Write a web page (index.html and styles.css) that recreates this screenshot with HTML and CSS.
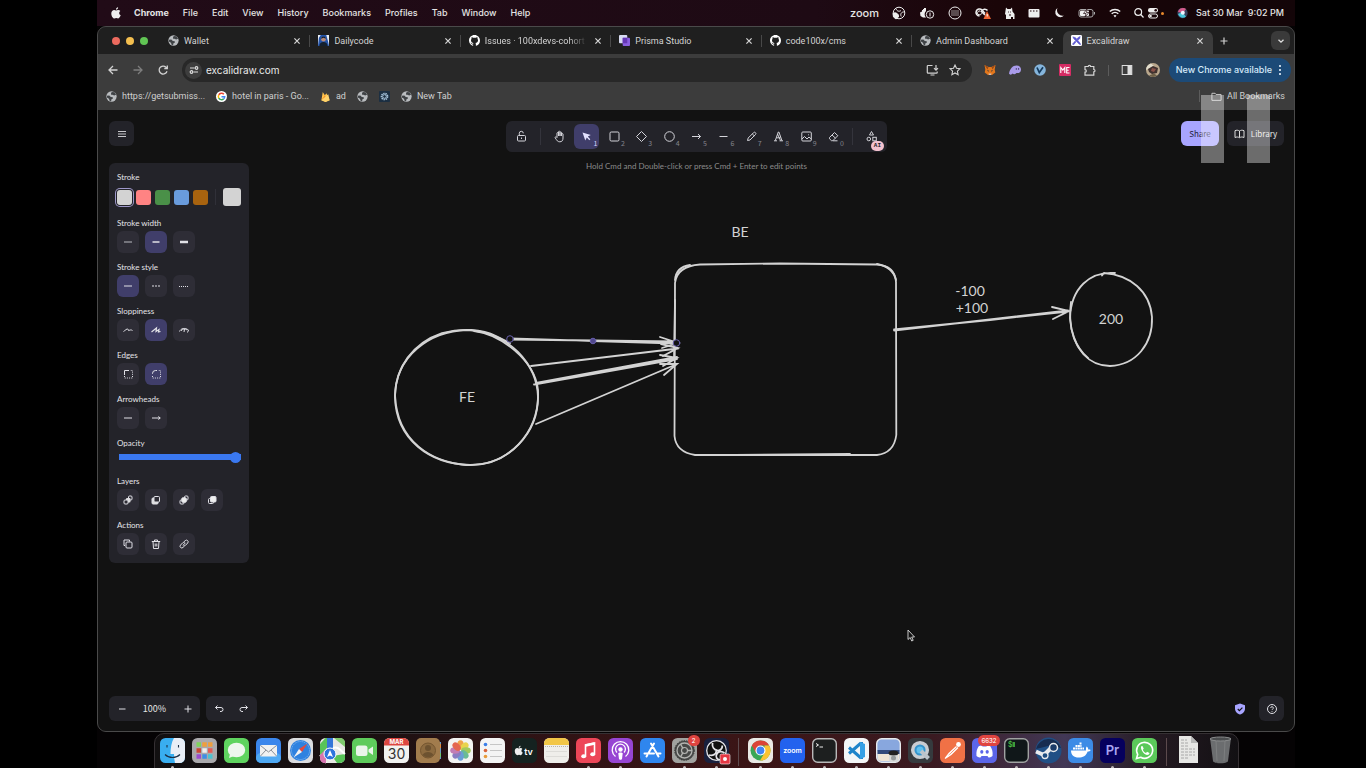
FILE: index.html
```html
<!DOCTYPE html>
<html lang="en">
<head>
<meta charset="utf-8">
<title>Excalidraw</title>
<link rel="stylesheet" href="styles.css">
</head>
<body>
<svg class="sprite" aria-hidden="true">
  <symbol id="globe" viewBox="0 0 12 12"><circle cx="6" cy="6" r="5.6" fill="#b9bcbf"/><path d="M1 5.2 3.6 5l1.700 1.500 2 .2.3 1.600-1.600.6-.4 2-1.400.2-1-2.600L1 7zM6.200 1l3 .4L11 4.200 8.800 5 7.300 4.200 6 4.400 5.400 3z" fill="#3f4245"/></symbol>
  <symbol id="close" viewBox="0 0 8 8"><path d="M1.400 1.400 6.600 6.600M6.600 1.400 1.400 6.600" stroke="#d6d6d6" stroke-width="1.200"/></symbol>
  <symbol id="github" viewBox="0 0 16 16"><path fill="#fff" d="M8 0C3.58 0 0 3.58 0 8c0 3.54 2.29 6.53 5.47 7.59.4.07.55-.17.55-.38v-1.490c-2.230.480-2.690-.940-2.690-.940-.360-.920-.890-1.170-.890-1.170-.730-.500.050-.490.050-.490.800.060 1.230.830 1.230.830.710 1.210 1.870.860 2.330.660.070-.520.280-.870.500-1.070-1.780-.200-3.640-.890-3.640-3.950 0-.870.310-1.590.820-2.150-.080-.200-.360-1.020.080-2.120 0 0 .670-.210 2.200.820.640-.180 1.320-.270 2-.270s1.360.090 2 .270c1.530-1.040 2.200-.820 2.200-.820.440 1.100.160 1.920.080 2.120.510.560.820 1.270.820 2.150 0 3.070-1.870 3.750-3.650 3.950.290.250.540.730.540 1.480v2.190c0 .210.150.460.550.380A8 8 0 0 0 16 8c0-4.420-3.580-8-8-8z"/></symbol>
</svg>

<div class="desktop">
  <header class="menubar">
    <nav class="menus">
      <svg class="apple" width="10" height="13" viewBox="0 0 10 13"><path fill="#eee" d="M5 3.400C5.700 3.400 6.400 2.800 7.300 2.900 8.200 2.900 8.900 3.300 9.300 4 7.600 5.100 7.900 7.500 9.700 8.200 9.200 9.700 8.300 11.300 7.200 11.400 6.500 11.400 6.100 11 5.300 11 4.500 11 4.100 11.400 3.400 11.400 1.900 11.400.300 8.800.300 6.400.300 4.200 1.700 2.900 3.100 2.900 3.900 2.900 4.500 3.400 5 3.400zM5 2.700C4.900 1.400 5.900.400 7.100.200 7.200 1.500 6.200 2.700 5 2.700z"/></svg>
      <b>Chrome</b><span>File</span><span>Edit</span><span>View</span><span>History</span><span>Bookmarks</span><span>Profiles</span><span>Tab</span><span>Window</span><span>Help</span>
    </nav>
    <div class="status">
      <span class="zoomword">zoom</span>
      <svg width="14" height="14" viewBox="0 0 14 14" fill="none" stroke="#eee"><circle cx="7" cy="7" r="5.800"/><path d="M4 2.500C4.500 5 7 6 9 4.500M12.500 6C9.500 5.500 8 8 9.200 10.500"/><path d="M1 7.500a3.500 3.500 0 0 1 5.500 3.500L4 13 1.500 11z" fill="#eee"/></svg>
      <svg width="16" height="14" viewBox="0 0 16 14"><path fill="#eee" d="M1 6.500 3 5.500V4h1V3h1V2h2v3a4.500 4.500 0 0 0 0 6.500H4L1.500 10z"/><circle cx="11" cy="8.500" r="3.700" fill="none" stroke="#eee"/><path d="M11 6.500v4" stroke="#eee"/></svg>
      <svg width="14" height="14" viewBox="0 0 14 14"><circle cx="7" cy="7" r="6" fill="none" stroke="#eee"/><path d="M3.400 5h7.500M3.400 7h7.500M3.400 9h7.500" stroke="#eee" stroke-width="1.200" stroke-dasharray="1.200 .8"/></svg>
      <svg width="16" height="14" viewBox="0 0 16 14"><path d="M4.500 10a3.500 3.500 0 1 1 2.500-6l3 3.500" fill="none" stroke="#eee" stroke-width="1.600"/><path d="M10 9 6.500 5.500a3.500 3.500 0 0 1 6-1" fill="none" stroke="#eee" stroke-width="1.600"/><path d="M6.500 7.200a2 2 0 1 1-1-2" fill="none" stroke="#eee"/><path d="M12 5l4 8H8.500z" fill="#ee6535"/><path d="M12.200 8v2.500" stroke="#fff"/></svg>
      <svg width="11" height="14" viewBox="0 0 11 14"><path fill="#eee" d="M2 1.500 3.500 3h3L8 1.500l.5 4L10.500 8v5H9v-2H7v2H2V9L1 8z"/><path d="M4 6h.8M6 6h.8M5 9h2" stroke="#20070d"/></svg>
      <svg width="12" height="14" viewBox="0 0 12 14"><rect x=".5" y="3" width="11" height="8.500" rx="1" fill="#eee"/><path d="M2 5h1.500M5 5h1.500M8 5h1.500" stroke="#20070d"/></svg>
      <svg width="12" height="14" viewBox="0 0 12 14"><path fill="#eee" d="M4.500 2A5 5 0 1 0 11 9.500 5.500 5.500 0 0 1 4.500 2z"/></svg>
      <svg width="18" height="14" viewBox="0 0 18 14"><rect x="1" y="3.500" width="14" height="7.500" rx="2" fill="none" stroke="#aaa"/><rect x="2" y="4.500" width="9" height="5.500" rx="1" fill="#eee"/><path d="M9 3 5.500 7.500h2.500L7 11l4-4.500H8.500z" fill="#eee" stroke="#20070d" stroke-width=".7"/><path d="M16.500 6v2.500" stroke="#aaa"/></svg>
      <svg width="12" height="14" viewBox="0 0 12 14" fill="none" stroke="#eee" stroke-width="1.500"><path d="M.8 5.500a7.500 7.500 0 0 1 10.400 0M2.700 7.800a4.800 4.800 0 0 1 6.600 0"/><path d="M6 11.500 4.500 9.600a2.400 2.400 0 0 1 3 0z" fill="#eee" stroke="none"/></svg>
      <svg width="10" height="14" viewBox="0 0 10 14" fill="none" stroke="#eee" stroke-width="1.200"><circle cx="4.200" cy="6" r="3.400"/><path d="M6.700 8.500 9.500 11.500"/></svg>
      <svg class="control" width="16" height="14" viewBox="0 0 16 14"><rect x="0" y="2" width="10" height="4.500" rx="2.200" fill="#eee"/><circle cx="7.700" cy="4.200" r="1.300" fill="#20070d"/><rect x=".5" y="8" width="9" height="4" rx="2" fill="none" stroke="#eee"/><circle cx="2.500" cy="10" r="1.300" fill="#eee"/><circle cx="14.500" cy="7.500" r="1.500" fill="#e8892c"/></svg>
      <svg class="siri" width="11" height="14" viewBox="0 0 11 14"><circle cx="5.500" cy="7" r="5.200" fill="#39415c"/><path d="M1 6a5 5 0 0 1 8-3L6 7z" fill="#d45b8a"/><path d="M1 8a5 5 0 0 0 8 2.500L5 6z" fill="#47c5d8"/><circle cx="5.800" cy="6.800" r="2" fill="#f1f5ff"/></svg>
      <time>Sat 30 Mar&nbsp; 9:02 PM</time>
    </div>
  </header>

  <main class="window">
    <div class="tabstrip">
      <div class="lights"><i class="red"></i><i class="yellow"></i><i class="green"></i></div>
      <div class="tabs">
        <div class="tab"><svg class="fav"><use href="#globe"/></svg><span>Wallet</span><button aria-label="Close Wallet"><svg><use href="#close"/></svg></button></div>
        <div class="tab"><svg class="fav" viewBox="0 0 12 12"><rect width="12" height="12" fill="#2453a8"/><path d="M0 0h3L1 3 0 12zM9 0h3v12l-1-5z" fill="#e8edf5"/><circle cx="6" cy="4.500" r="2.500" fill="#b98a78"/><path d="M3.500 4a2.500 2.500 0 0 1 5 0L6 3zM1.500 12c0-3 2-4.500 4.500-4.500s4.500 1.500 4.500 4.500z" fill="#14202f"/></svg><span>Dailycode</span><button aria-label="Close Dailycode"><svg><use href="#close"/></svg></button></div>
        <div class="tab"><svg class="fav"><use href="#github"/></svg><span class="fade">Issues · 100xdevs-cohort</span><button aria-label="Close Issues"><svg><use href="#close"/></svg></button></div>
        <div class="tab"><svg class="fav" viewBox="0 0 12 12"><rect width="9" height="9" rx="1" fill="#d8dcf2"/><rect x="4" y="3" width="8" height="9" rx="1" fill="#8a5fe0"/><rect x="4" y="3" width="5" height="6" fill="#6537b5"/></svg><span>Prisma Studio</span><button aria-label="Close Prisma Studio"><svg><use href="#close"/></svg></button></div>
        <div class="tab"><svg class="fav"><use href="#github"/></svg><span>code100x/cms</span><button aria-label="Close code100x/cms"><svg><use href="#close"/></svg></button></div>
        <div class="tab last"><svg class="fav"><use href="#globe"/></svg><span>Admin Dashboard</span><button aria-label="Close Admin Dashboard"><svg><use href="#close"/></svg></button></div>
        <div class="tab active"><svg class="fav" viewBox="0 0 12 12"><rect width="12" height="12" rx="1.500" fill="#fff"/><path d="M2 2l3 1 5 6 .5 1.500L9 10 3 4zM10 1.500 7.500 3 6 5l1 1 2.500-2zM4.500 6.500 1.500 10l1.500.500 2.500-3z" fill="#5b57d1" stroke="#5b57d1" stroke-width=".6"/></svg><span>Excalidraw</span><button aria-label="Close Excalidraw"><svg><use href="#close"/></svg></button></div>
      </div>
      <div class="tabtools">
        <button aria-label="New tab"><svg width="10" height="10" viewBox="0 0 10 10"><path d="M5 1.500v7M1.500 5h7" stroke="#d0d0d0" stroke-width="1.200"/></svg></button>
        <button class="tabsearch" aria-label="Search tabs"><svg width="8" height="8" viewBox="0 0 8 8"><path d="M1.500 2.700 4 5.200 6.500 2.700" fill="none" stroke="#ddd" stroke-width="1.300"/></svg></button>
      </div>
    </div>

    <div class="toolbar">
      <button aria-label="Back"><svg width="12" height="12" viewBox="0 0 12 12" fill="none" stroke="#d2d2d2" stroke-width="1.300"><path d="M10.500 6H2M6 2 2 6l4 4"/></svg></button>
      <button aria-label="Forward"><svg width="12" height="12" viewBox="0 0 12 12" fill="none" stroke="#7d7d7d" stroke-width="1.300"><path d="M1.500 6H10M6 2l4 4-4 4"/></svg></button>
      <button aria-label="Reload"><svg width="12" height="12" viewBox="0 0 12 12" fill="none" stroke="#d2d2d2" stroke-width="1.300"><path d="M10 7.200A4 4 0 1 1 9 3.200l1 1"/><path d="M10.300 1.500v3H7.300" /></svg></button>
      <div class="omnibox">
        <button class="siteinfo" aria-label="Site information"><svg width="10" height="10" viewBox="0 0 10 10" fill="none" stroke="#ddd" stroke-width="1.200"><path d="M1 3h4.500M9 7H4.500"/><circle cx="7.500" cy="3" r="1.300"/><circle cx="2.500" cy="7" r="1.300"/></svg></button>
        <input type="text" value="excalidraw.com" aria-label="Address">
        <button aria-label="Install app"><svg width="13" height="12" viewBox="0 0 13 12" fill="none" stroke="#d2d2d2" stroke-width="1.200"><path d="M6.500 1.500H2a.7.700 0 0 0-.7.700v6.300c0 .4.300.7.700.7h8.500c.4 0 .7-.3.700-.7V7.500M4.500 11h4M10 1v5M8 4.200l2 2 2-2"/></svg></button>
        <button aria-label="Bookmark"><svg width="12" height="12" viewBox="0 0 12 12" fill="none" stroke="#d2d2d2" stroke-width="1.100"><path d="M6 1l1.500 3.300 3.500.4-2.600 2.400.7 3.600L6 8.900l-3.100 1.800.7-3.600L1 4.700l3.500-.4z"/></svg></button>
      </div>
      <div class="extensions">
        <svg viewBox="0 0 12 12"><path d="M.5 1 4.500 3h3l4-2-.8 4.500.6 3L8 11H4L.7 8.500l.6-3z" fill="#e2761b"/><path d="M.5 1l4 2-1 2.500zM11.500 1l-4 2 1 2.500z" fill="#9a4a16"/><path d="M3 6l2 .7-.7 1zM9 6l-2 .7.7 1z" fill="#233447"/><path d="M4.500 9.500h3L7 11H5z" fill="#d6c0b3"/></svg>
        <svg viewBox="0 0 12 12"><path d="M0 9.500C1 5 3.500 1.500 7.500 1.500c3 0 4.500 2 4.500 4 0 3-2.500 4-4.500 3.500C6 10.500 4.500 10.800 3.800 9.500 2.500 11 .5 11 0 9.500z" fill="#a99bea"/><path d="M7.300 4.200v1.500M9.600 4.200v1.500" stroke="#3c315b"/></svg>
        <svg viewBox="0 0 12 12"><circle cx="6" cy="6" r="5.800" fill="#85b5dc"/><path d="M3 3.500l2.300 5L9 3.300" fill="none" stroke="#153a5c" stroke-width="1.700"/></svg>
        <svg viewBox="0 0 12 12"><rect width="12" height="12" rx="1" fill="#d52c64"/><path d="M1.800 9V3.500l2 2.500 2-2.500V9M10.500 3.500H7.700V9h2.800M7.700 6.200h2" fill="none" stroke="#fff" stroke-width="1.100"/></svg>
        <svg viewBox="0 0 12 12" fill="none" stroke="#d6d6d6" stroke-width="1.200"><path d="M1 2.500h3.200a1.200 1.200 0 1 1 2.400 0h3.200v3a1.200 1.200 0 1 1 0 2.400v3.300H1V8.200a1.300 1.300 0 0 0 0-2.600z"/></svg>
        <i class="vline"></i>
        <svg viewBox="0 0 12 12"><rect x="1.200" y="1.500" width="9.600" height="9" fill="none" stroke="#ddd"/><path d="M6.500 1.500h4.300v9H6.500z" fill="#ddd"/></svg>
        <svg class="avatar" viewBox="0 0 14 14"><circle cx="7" cy="7" r="7" fill="#b9a78c"/><path d="M0 7a7 7 0 0 1 5-6.600L8 3 2 6z" fill="#e0dccb"/><path d="M2 6l5-3 5 2-1 5-5 1-3-2z" fill="#40322f"/><path d="M6 5l4 1-2 3-3-1z" fill="#8a5148"/><path d="M3 12.500a7 7 0 0 0 8 0l-3-2z" fill="#6e6047"/></svg>
      </div>
      <button class="update">New Chrome available<svg width="4" height="12" viewBox="0 0 4 12" fill="#e7f1fb"><circle cx="2" cy="2" r="1.100"/><circle cx="2" cy="6" r="1.100"/><circle cx="2" cy="10" r="1.100"/></svg></button>
    </div>

    <div class="bookmarks">
      <a href="#"><svg><use href="#globe"/></svg>https://getsubmiss...</a>
      <a href="#"><svg viewBox="0 0 12 12"><circle cx="6" cy="6" r="6" fill="#fff"/><g fill="none" stroke-width="1.600"><path d="M8.600 3.600A3.500 3.500 0 0 0 3 4.300" stroke="#ea4335"/><path d="M3 4.300a3.500 3.500 0 0 0 0 3.400" stroke="#fbbc05"/><path d="M3 7.700a3.500 3.500 0 0 0 5.300.9" stroke="#34a853"/><path d="M8.300 8.600A3.400 3.400 0 0 0 9.500 6.200H6" stroke="#4285f4"/></g></svg>hotel in paris - Go...</a>
      <a href="#"><svg viewBox="0 0 12 12"><path d="M1.500 10 3 1l2.300 3.600L7 2.500 10.500 10 6 12z" fill="#ffc24a"/><path d="M1.500 10 5.300 4.600 6.500 7z" fill="#f4902b"/><path d="M1.500 10l7.500-6.500L10.500 10 6 12z" fill="#ffd36b"/></svg>ad</a>
      <a href="#" aria-label="Untitled bookmark"><svg><use href="#globe"/></svg></a>
      <a href="#" aria-label="Settings bookmark"><svg viewBox="0 0 12 12"><rect width="12" height="12" rx="1" fill="#1c2f42"/><circle cx="6" cy="6" r="3.300" fill="none" stroke="#a7c3da" stroke-width="1.800" stroke-dasharray="1.500 .8"/><circle cx="6" cy="6" r="2" fill="none" stroke="#a7c3da"/></svg></a>
      <a href="#"><svg><use href="#globe"/></svg>New Tab</a>
      <a href="#" class="all"><svg viewBox="0 0 12 12" fill="none" stroke="#d0d0d0"><path d="M1 2.500h3.500l1 1.300H11v6.400H1z"/></svg>All Bookmarks</a>
    </div>

    <section class="board">
      <svg class="scene" viewBox="98 110 1196 621" fill="none" stroke="#d3d3d3" stroke-width="1.800" stroke-linecap="round">
        <path d="M467 330C430 331 395 356 395 397 396 440 430 464 470 465 510 465 538 432 538 397 537 365 510 332 467 330"/>
        <path d="M474 331C500 334 535 360 538 390 540 433 508 467 466 465 433 462 397 443 395 395 396 368 412 343 442 333 462 328 482 329 496 336L510 343"/>
        <path d="M700 264.500 780 263.500 877 264.500Q895 266 896 282L896.300 435Q894 453 877 455L695 455Q676 452 674.500 436L675 283Q677 266 700 264.500"/>
        <path d="M675 280Q676 267 690 265M735 455 850 454M877 264Q893 267 896 280M675 300 674 360"/>
        <path d="M510 338.500 676 343.500M510 339.500 676 341.500M660 337 678 343 662 348"/>
        <path d="M531 366 678 348.500M661 344 678 348 663 356"/>
        <path d="M534 384.500 677 359M536 383 677 357M660 355 677 358 663 366"/>
        <path d="M536 424 677 364M660 364 677 364 664 375"/>
        <path d="M894 330.500 1068 310.500M894 329.500 990 320 1068 311.500M1052 307 1069 311 1053 319"/>
        <path d="M1115 273C1090 271 1071 288 1070 318 1072 350 1090 366 1110 366 1136 365 1153 344 1152 317 1150 291 1130 275 1104 273L1102 275.500"/>
        <path d="M1071 302C1067 330 1077 349 1088 358"/>
        <g stroke="#6860ac" stroke-width="1"><circle cx="510" cy="339" r="3.300" fill="#121212"/><circle cx="676.500" cy="343" r="3.300" fill="#121212"/><circle cx="593" cy="341" r="2.800" fill="#51488e"/></g>
        <g class="hand"><text x="740" y="237">BE</text><text x="467" y="402">FE</text><text x="970" y="296">-100</text><text x="972" y="313">+100</text><text x="1111" y="324">200</text></g>
      </svg>

      <div class="top">
        <div class="leftcol">
          <button class="island square" aria-label="Menu"><svg width="10" height="10" viewBox="0 0 10 10" stroke="#c8c8cc"><path d="M1 2.500h8M1 5h8M1 7.500h8"/></svg></button>
          <aside class="island panel">
            <fieldset class="colors"><legend>Stroke</legend><div class="row">
              <button class="swatch white on" aria-label="White"></button><button class="swatch pink" aria-label="Red"></button><button class="swatch grn" aria-label="Green"></button><button class="swatch blue" aria-label="Blue"></button><button class="swatch brown" aria-label="Brown"></button><i class="vline"></i><button class="swatch white big" aria-label="Current colour"></button></div></fieldset>
            <fieldset><legend>Stroke width</legend><div class="row">
              <button aria-label="Thin"><svg><path d="M2 6h8" stroke-width=".8"/></svg></button><button class="on" aria-label="Bold"><svg><path d="M2.500 6h7" stroke-width="1.700"/></svg></button><button aria-label="Extra bold"><svg><path d="M2 6h8" stroke-width="2.500"/></svg></button></div></fieldset>
            <fieldset><legend>Stroke style</legend><div class="row">
              <button class="on" aria-label="Solid"><svg><path d="M2 6h8"/></svg></button><button aria-label="Dashed"><svg><path d="M2 6h8" stroke-dasharray="2 1"/></svg></button><button aria-label="Dotted"><svg><path d="M1 6.500h10" stroke-dasharray="1 1"/></svg></button></div></fieldset>
            <fieldset><legend>Sloppiness</legend><div class="row">
              <button aria-label="Architect"><svg><path d="M1.500 7.500C3 6.500 5 4.500 5.800 5S6 7 7 6.500 9 5.500 10.500 6.500"/></svg></button><button class="on" aria-label="Artist"><svg><path d="M1.500 8 6.500 4 6 7.500 9 5.500 8.500 8 10.500 7.500" stroke-width="1.200"/></svg></button><button aria-label="Cartoonist"><svg><path d="M1.500 7.500C3 4 7 3.500 10.500 6L9.500 8.500M3 7c2-2.500 4-2.500 6-1M6.500 5 6 8" stroke-width="1"/></svg></button></div></fieldset>
            <fieldset><legend>Edges</legend><div class="row">
              <button aria-label="Sharp"><svg><path d="M2.500 7V2.500H7"/><path d="M2.500 8v2h8V2.500H8" stroke-dasharray="1 1.200"/></svg></button><button class="on" aria-label="Round"><svg><path d="M2.500 6V5.500a3 3 0 0 1 3-3H7"/><path d="M2.500 8v2h8V2.500H8" stroke-dasharray="1 1.200"/></svg></button></div></fieldset>
            <fieldset><legend>Arrowheads</legend><div class="row">
              <button aria-label="No start arrowhead"><svg><path d="M2 6h8"/></svg></button><button aria-label="End arrow"><svg><path d="M2 6h8M8.300 4.500 10.300 6 8.300 7.500"/></svg></button></div></fieldset>
            <fieldset class="opacity"><legend><label for="opacity">Opacity</label></legend><input id="opacity" type="range" min="0" max="100" value="100"></fieldset>
            <fieldset><legend>Layers</legend><div class="row">
              <button aria-label="Send to back"><svg><rect x="4" y="4" width="4.500" height="4.500" rx="1" fill="#ddd" stroke="none"/><rect x="6.500" y="2" width="3.500" height="4" rx="1"/><rect x="2" y="6" width="4" height="4" rx="1" fill="#2e2d35"/></svg></button><button aria-label="Send backward"><svg><rect x="2" y="4" width="6" height="6" rx="1" fill="#ddd"/><rect x="4" y="2.500" width="5.500" height="5.500" rx="1" fill="#2e2d35"/></svg></button><button aria-label="Bring forward"><svg><rect x="6.500" y="2" width="3.500" height="4" rx="1"/><rect x="2" y="6" width="4" height="4" rx="1"/><rect x="3.800" y="3.800" width="4.500" height="4.500" rx="1" fill="#eee"/></svg></button><button aria-label="Bring to front"><svg><rect x="2.500" y="4.500" width="5" height="5" rx="1"/><rect x="4.500" y="2.500" width="5.500" height="5.500" rx="1" fill="#eee"/></svg></button></div></fieldset>
            <fieldset><legend>Actions</legend><div class="row">
              <button aria-label="Duplicate"><svg><path d="M3 7.500H2V2h5.500v1.500"/><rect x="4" y="4" width="6" height="6" rx="1"/></svg></button><button aria-label="Delete"><svg><path d="M1.800 3.500h8.400M4.500 3.500V2h3v1.500M3 3.500l.5 7h5l.5-7M5.200 5.500v3M6.800 5.500v3"/></svg></button><button aria-label="Link"><svg><path d="M5 7.300 7.500 4.800M5.700 4l1.500-1.300a1.600 1.600 0 0 1 2.500 2.300L7.500 7.300a1.500 1.500 0 0 1-2 0M6.500 8 5 9.400a1.600 1.600 0 0 1-2.500-2.300L4.700 4.800a1.500 1.500 0 0 1 2 0"/></svg></button></div></fieldset>
          </aside>
        </div>
        <div class="midcol">
          <div class="island tools">
            <button aria-label="Lock"><svg><rect x="2.500" y="5.500" width="8" height="5.500" rx="1"/><path d="M4.300 5.500V3.300a2 2 0 0 1 4 0M6.500 7.500v1.500"/></svg></button>
            <i class="vline"></i>
            <div class="toolset">
              <button aria-label="Hand"><svg><path d="M4 7.500V3a.8.800 0 0 1 1.500 0v3-4.300a.8.800 0 0 1 1.500 0V6 2.400a.8.800 0 0 1 1.500 0V6 4a.8.800 0 0 1 1.500 0v4c0 2.500-1 3.800-3.200 3.800C4.500 11.800 4 10.500 2.300 8c-.6-1 .5-1.600 1.200-1z"/></svg></button>
              <button class="on" aria-label="Selection"><svg><path d="M2.500 2.500l2.800 8 1.500-3 2.500 2.700 1-1L7.800 6.500l3-1.500z" fill="#e3e1ff" stroke="none"/></svg><sub>1</sub></button>
              <button aria-label="Rectangle"><svg><rect x="2" y="2" width="9" height="9" rx="1.200"/></svg><sub>2</sub></button>
              <button aria-label="Diamond"><svg><path d="M6.500 1.500l5 5-5 5-5-5z" stroke-linejoin="round"/></svg><sub>3</sub></button>
              <button aria-label="Ellipse"><svg><circle cx="6.500" cy="6.500" r="4.800"/></svg><sub>4</sub></button>
              <button aria-label="Arrow"><svg><path d="M2 6.500h8.500M8 4 10.500 6.500 8 9"/></svg><sub>5</sub></button>
              <button aria-label="Line"><svg><path d="M2.500 6.500h8"/></svg><sub>6</sub></button>
              <button aria-label="Draw"><svg><path d="M2.500 10.500l.7-2.500L8.500 2.700a1.300 1.300 0 0 1 2 1.800L5 10zM7.300 4l2 1.800"/></svg><sub>7</sub></button>
              <button aria-label="Text"><svg><path d="M2 10.800h3M7.500 10.800H11M3.300 10.500 6.300 2h.6l3 8.500M8.500 10.500 5.500 4M4.500 7.800h4"/></svg><sub>8</sub></button>
              <button aria-label="Image"><svg><rect x="1.800" y="2" width="9.500" height="9" rx="1"/><path d="M2 9l2.500-2.500L7 9l2-2 2.200 2M8 4.800h.8"/></svg><sub>9</sub></button>
              <button aria-label="Eraser"><svg><path d="M2.500 7.500l5-5 3.300 3.200-5 5H4.500L2.500 8.800zM5 5l3.500 3.200M6 10.800h4.500"/></svg><sub>0</sub></button>
            </div>
            <i class="vline"></i>
            <button aria-label="More tools"><svg><path d="M6.500 1.500l2 3.500h-4z"/><circle cx="3.800" cy="9" r="1.800"/><rect x="7.800" y="7.300" width="3.500" height="3.500"/></svg><span class="ai">AI</span></button>
          </div>
          <p class="hint">Hold Cmd and Double-click or press Cmd + Enter to edit points</p>
        </div>
        <div class="rightcol">
          <button class="share">Share</button>
          <button class="island library"><svg width="11" height="10" viewBox="0 0 11 10" fill="none" stroke="#ddd"><path d="M5.500 2C4 1 2.500 1 1 1.700v6.800c1.500-.7 3-.7 4.500.2C7 7.800 8.500 7.800 10 8.500V1.700C8.500 1 7 1 5.500 2zM5.500 2v6.500"/></svg>Library</button>
        </div>
      </div>

      <footer class="bottom">
        <div class="island zoombox"><button aria-label="Zoom out"><svg><path d="M3 6h6.500"/></svg></button><button class="pct">100%</button><button aria-label="Zoom in"><svg><path d="M2.500 6h7M6 2.500v7"/></svg></button></div>
        <div class="island history"><button aria-label="Undo"><svg><path d="M4.500 2.500 2.500 4.500l2 2M2.500 4.500H8a2 2 0 0 1 0 4H7"/></svg></button><button aria-label="Redo"><svg><path d="M7.500 2.500l2 2-2 2M9.500 4.500H4a2 2 0 0 0 0 4h1"/></svg></button></div>
        <svg class="shield" width="12" height="12" viewBox="0 0 12 12"><path d="M6 .5 11 2.300v3.500C11 8.800 8.500 10.800 6 11.500 3.500 10.800 1 8.800 1 5.800V2.300z" fill="#a8a5ff"/><path d="M3.800 6l1.600 1.600 3-3" fill="none" stroke="#121212" stroke-width="1.200"/></svg>
        <button class="island square" aria-label="Help"><svg width="12" height="12" viewBox="0 0 12 12" fill="none" stroke="#ccc"><circle cx="6" cy="6" r="4.500"/><path d="M4.700 5a1.300 1.300 0 1 1 1.800 1.200L6 6.800M6 8v.8"/></svg></button>
      </footer>
    </section>

    <div class="pause" aria-hidden="true"><i></i><i></i></div>
    <svg class="cursor" width="8" height="13" viewBox="0 0 8 13"><path d="M1 1v9.500l2.200-2 1.500 3.500 1.500-.7-1.500-3.300H7.500z" fill="#111" stroke="#ddd" stroke-width=".9"/></svg>
  </main>

  <nav class="dock">
    <div class="shelf">
      <a class="run" href="#" aria-label="Finder"><svg viewBox="0 0 25 25"><rect width="25" height="25" rx="5.500" fill="#39aef0"/><path d="M14 0h5.500A5.500 5.500 0 0 1 25 5.500v14a5.500 5.500 0 0 1-5.500 5.500H15c-.7-3-1-6-1-9h-3.500C10.500 10 11.500 4 14 0z" fill="#e9eef6"/><path d="M7 7v2.500M18.500 7v2.500M5 16.500c4 4 11 4 15 0" fill="none" stroke="#1c3046" stroke-width="1.100"/></svg></a>
      <a href="#" aria-label="Launchpad"><svg viewBox="0 0 25 25"><rect width="25" height="25" rx="5.500" fill="#aaa9ac"/><g stroke-width="4.500"><path d="M4.500 6.500H9" stroke="#7fd55c"/><path d="M10.300 6.500h4.500M16 6.500h4.500" stroke="#ef9f3e"/><path d="M4.500 12.500H9" stroke="#cc4534"/><path d="M10.300 12.500h4.500" stroke="#eee"/><path d="M16 12.500h4.500" stroke="#e65a54"/><path d="M4.500 18.500H9" stroke="#9b4bd0"/><path d="M10.300 18.500h4.500" stroke="#3d8fe6"/><path d="M16 18.500h4.500" stroke="#4dc3d0"/></g></svg></a>
      <a href="#" aria-label="Messages"><svg viewBox="0 0 25 25"><rect width="25" height="25" rx="5.500" fill="#5fd45f"/><ellipse cx="12.500" cy="12" rx="8.700" ry="7.300" fill="#eef7ee"/><path d="M6 16l-1 4 5-2z" fill="#eef7ee"/></svg></a>
      <a href="#" aria-label="Mail"><svg viewBox="0 0 25 25"><rect width="25" height="25" rx="5.500" fill="#3b86ec"/><rect y="15" width="25" height="10" rx="5" fill="#4fa9f3"/><rect x="4" y="7" width="17" height="11.500" rx="1.500" fill="#f1f1f1"/><path d="M4.500 7.500l8 6.500 8-6.500M4.500 18l5.500-6M20.500 18 15 12" fill="none" stroke="#8a8f98"/></svg></a>
      <a href="#" aria-label="Safari"><svg viewBox="0 0 25 25"><rect width="25" height="25" rx="5.500" fill="#dcdde0"/><circle cx="12.500" cy="12.500" r="10.500" fill="#2f82e0"/><circle cx="12.500" cy="12.500" r="9" fill="none" stroke="#8cbdf0" stroke-width="1" stroke-dasharray="1 1"/><path d="M19.500 5.500 14 14l-3-3z" fill="#e5493d"/><path d="M5.500 19.500 11 11l3 3z" fill="#f2f2f2"/></svg></a>
      <a href="#" aria-label="Maps"><svg viewBox="0 0 25 25"><rect width="25" height="25" rx="5.500" fill="#e8e8e4"/><path d="M0 6 5.500 0H7v10L0 18zM25 16v4a5 5 0 0 1-5 5h-3l-5-7z" fill="#58c458"/><path d="M7 0h6v12H7z" fill="#3576d8"/><path d="M14 0h6c3 0 5 2 5 5v4z" fill="#7fc96c"/><path d="M13 10c5-2 7 2 12 6M0 17l6 8" fill="none" stroke="#fff" stroke-width="2"/><path d="M0 17l6-6v14H5c-3 0-5-2-5-5z" fill="#d875b0"/><circle cx="10" cy="16" r="6" fill="#2e74de" stroke="#fff"/><path d="M10 12l3 7-3-1.500L7 19z" fill="#fff"/></svg></a>
      <a href="#" aria-label="FaceTime"><svg viewBox="0 0 25 25"><rect width="25" height="25" rx="5.500" fill="#5ecb5b"/><rect x="4" y="7.500" width="11.500" height="10.500" rx="2.500" fill="#eaf5ea"/><path d="M16.500 11.500 21 8.500v8.500l-4.500-3z" fill="#eaf5ea"/></svg></a>
      <a href="#" aria-label="Calendar"><svg viewBox="0 0 25 25"><rect width="25" height="25" rx="5.500" fill="#f2f2f0"/><path d="M0 7.500v-2A5.500 5.500 0 0 1 5.500 0h14A5.500 5.500 0 0 1 25 5.500v2z" fill="#dc4640"/><text x="12.500" y="6" class="cal-m">MAR</text><text x="12.500" y="21" class="cal-d">30</text></svg></a>
      <a href="#" aria-label="Contacts"><svg viewBox="0 0 25 25"><rect x="18" y="4" width="7" height="17" fill="#6a9bc4"/><rect width="24" height="25" rx="5" fill="#a27c4d"/><path d="M24.500 6v4" stroke="#e08b3e"/><path d="M24.500 15v4" stroke="#6cc76b"/><circle cx="12" cy="12.500" r="7.500" fill="#8d6b40" stroke="#755630"/><circle cx="12" cy="10" r="3" fill="#6d5230"/><path d="M6.500 17c2-4 9-4 11 0a8 8 0 0 1-11 0z" fill="#6d5230"/></svg></a>
      <a href="#" aria-label="Photos"><svg viewBox="0 0 25 25"><rect width="25" height="25" rx="5.500" fill="#f3f3f2"/><g opacity=".9"><ellipse cx="12.500" cy="7" rx="3.300" ry="4.800" fill="#f09a38"/><ellipse cx="12.500" cy="7" rx="3.300" ry="4.800" fill="#e8d03c" transform="rotate(45 12.500 12.500)"/><ellipse cx="12.500" cy="7" rx="3.300" ry="4.800" fill="#9ac54c" transform="rotate(90 12.500 12.500)"/><ellipse cx="12.500" cy="7" rx="3.300" ry="4.800" fill="#5bb58d" transform="rotate(135 12.500 12.500)"/><ellipse cx="12.500" cy="7" rx="3.300" ry="4.800" fill="#5c95d3" transform="rotate(180 12.500 12.500)"/><ellipse cx="12.500" cy="7" rx="3.300" ry="4.800" fill="#7e71bd" transform="rotate(225 12.500 12.500)"/><ellipse cx="12.500" cy="7" rx="3.300" ry="4.800" fill="#bd71ae" transform="rotate(270 12.500 12.500)"/><ellipse cx="12.500" cy="7" rx="3.300" ry="4.800" fill="#e3573f" transform="rotate(315 12.500 12.500)"/></g></svg></a>
      <a href="#" aria-label="Reminders"><svg viewBox="0 0 25 25"><rect width="25" height="25" rx="5.500" fill="#f4f4f4"/><circle cx="5.500" cy="6.500" r="1.800" fill="#3a7ee8"/><circle cx="5.500" cy="12.500" r="1.800" fill="#d8643c"/><circle cx="5.500" cy="18.500" r="1.800" fill="#e89b3b"/><path d="M10 6.500h12M10 12.500h12M10 18.500h12" stroke="#c6c6c6"/></svg></a>
      <a href="#" aria-label="TV"><svg viewBox="0 0 25 25"><rect width="25" height="25" rx="5.500" fill="#152220"/><g transform="translate(2.500 7.500) scale(.85)"><path fill="#eee" d="M5 3.400C5.700 3.400 6.400 2.800 7.300 2.900 8.200 2.900 8.900 3.300 9.300 4 7.600 5.100 7.900 7.500 9.700 8.200 9.200 9.700 8.300 11.300 7.200 11.400 6.500 11.400 6.100 11 5.300 11 4.500 11 4.100 11.400 3.400 11.400 1.900 11.400.300 8.800.300 6.400.300 4.200 1.700 2.900 3.100 2.900 3.900 2.900 4.500 3.400 5 3.400zM5 2.700C4.900 1.400 5.900.400 7.100.200 7.200 1.500 6.200 2.700 5 2.700z"/></g><text x="16.500" y="17" class="tv">tv</text></svg></a>
      <a href="#" aria-label="Notes"><svg viewBox="0 0 25 25"><rect width="25" height="25" rx="5.500" fill="#efeeea"/><path d="M0 7V5.500A5.500 5.500 0 0 1 5.500 0h14A5.500 5.500 0 0 1 25 5.500V7z" fill="#f2c646"/><path d="M1 8.500h23" stroke="#b8b5aa" stroke-dasharray="1 1"/><path d="M2 13.500h21M2 18.500h21" stroke="#d5d4d0" stroke-width=".7"/></svg></a>
      <a class="run" href="#" aria-label="Music"><svg viewBox="0 0 25 25"><rect width="25" height="25" rx="5.500" fill="#ed4658"/><path d="M9.500 18V7l9-2v11" fill="none" stroke="#fff" stroke-width="1.600"/><path d="M9.500 7.500l9-2" stroke="#fff" stroke-width="2.500"/><ellipse cx="7.700" cy="18.300" rx="2.500" ry="2" fill="#fff"/><ellipse cx="16.700" cy="16.300" rx="2.500" ry="2" fill="#fff"/></svg></a>
      <a class="run" href="#" aria-label="Podcasts"><svg viewBox="0 0 25 25"><rect width="25" height="25" rx="5.500" fill="#9745d3"/><g fill="none" stroke="#fff" stroke-width="1.300"><path d="M7.500 18.500a8.300 8.300 0 1 1 10 0"/><path d="M9 14.500a4.900 4.900 0 1 1 7 0"/></g><circle cx="12.500" cy="11.500" r="2.200" fill="#fff"/><path d="M10.300 15.500c0-1.500 4.400-1.500 4.400 0l-.7 5.500c-.3 1-2.700 1-3 0z" fill="#fff"/></svg></a>
      <a href="#" aria-label="App Store"><svg viewBox="0 0 25 25"><rect width="25" height="25" rx="5.500" fill="#2f86ee"/><path d="M11 5.500l7.500 13M14 5.500 8.500 15M6.500 18.500l.8-1.300M4.500 15.500h9.500M17 15.500h3.500" stroke="#fff" stroke-width="2" stroke-linecap="round"/></svg></a>
      <a class="run" href="#" aria-label="System Settings"><svg viewBox="0 0 25 25"><rect width="25" height="25" rx="5.500" fill="#a1a29f"/><circle cx="12.500" cy="12.500" r="9.800" fill="#474847" stroke="#343534" stroke-dasharray="1.500 1"/><circle cx="12.500" cy="12.500" r="7.500" fill="none" stroke="#b2b3b0" stroke-width="1.300"/><circle cx="12.500" cy="12.500" r="3" fill="none" stroke="#b2b3b0" stroke-width="1.200"/><path d="M15 12.500h5M11 10.500 8.500 6M11 14.500 8.500 19" stroke="#b2b3b0" stroke-width="1.500"/></svg><em>2</em></a>
      <a class="run" href="#" aria-label="OBS"><svg viewBox="0 0 25 25"><rect width="25" height="25" rx="5.500" fill="#19203d"/><circle cx="12.500" cy="12.500" r="9.800" fill="#111" stroke="#e4e4e8" stroke-width="1.300"/><path d="M8.500 5c-.5 4 1.500 7 5 7.500 3 .3 5-2 4.800-5M20.500 15c-3-2.500-6.500-1.500-8 1.500-1 2.500.5 5 3 5.500M5 17c4 1 7-.5 7.500-4.500" fill="none" stroke="#e4e4e8" stroke-width="1.800"/><rect x="16" y="16" width="10" height="10" rx="1.500" fill="#e53743" stroke="#fff" stroke-width=".6"/><circle cx="21" cy="21" r="2" fill="#fff"/></svg></a>
      <i class="sep"></i>
      <a class="run" href="#" aria-label="Chrome"><svg viewBox="0 0 25 25"><rect width="25" height="25" rx="5.500" fill="#eae9e6"/><circle cx="12.500" cy="12.500" r="10" fill="#3aa757"/><path d="M12.500 2.500a10 10 0 0 1 8.700 5H12.500L8 15 3.800 7.500a10 10 0 0 1 8.700-5z" fill="#dc4437"/><path d="M21.200 7.500A10 10 0 0 1 12 22.500L16.500 15l0-7.500z" fill="#fbc332"/><circle cx="12.500" cy="12.500" r="5" fill="#fff"/><circle cx="12.500" cy="12.500" r="3.900" fill="#4285f4"/></svg></a>
      <a class="run" href="#" aria-label="Zoom"><svg viewBox="0 0 25 25"><rect width="25" height="25" rx="5.500" fill="#2362ee"/><text x="12.500" y="15" class="zm">zoom</text></svg></a>
      <a class="run" href="#" aria-label="Terminal"><svg viewBox="0 0 25 25"><rect x=".7" y=".7" width="23.600" height="23.600" rx="5" fill="#1d1f1f" stroke="#b9b9b9" stroke-width="1.400"/><path d="M4 5.500l2.500 1.500L4 8.500M7.500 9h3.500" fill="none" stroke="#eee"/></svg></a>
      <a class="run" href="#" aria-label="Visual Studio Code"><svg viewBox="0 0 25 25"><rect width="25" height="25" rx="5.500" fill="#f4f6f7"/><path d="M17.500 4v17M17 5 5 15.500M17 20 5 9.500" fill="none" stroke="#1f84ca" stroke-width="3"/><path d="M16 4l5 2v13l-5 2z" fill="#35a0e6"/></svg></a>
      <a class="run" href="#" aria-label="Preview"><svg viewBox="0 0 25 25"><rect x=".7" y=".7" width="23.600" height="23.600" rx="5" fill="#88a7de" stroke="#e8ebee" stroke-width="1.400"/><path d="M1.500 13h22v6a4 4 0 0 1-4 4h-14a4 4 0 0 1-4-4z" fill="#efe5d6"/><path d="M1.500 12h22v4h-22z" fill="#324a7c"/><rect x="13" y="14" width="9" height="10" rx="2" fill="#d8dad9"/><ellipse cx="17.500" cy="15" rx="5" ry="2.500" fill="#222"/><circle cx="17.500" cy="20" r="2.500" fill="#989d9e"/></svg></a>
      <a class="run" href="#" aria-label="QuickTime"><svg viewBox="0 0 25 25"><rect width="25" height="25" rx="5.500" fill="#353a3e"/><circle cx="12" cy="12" r="7.300" fill="#3594cc" stroke="#c9cdd2" stroke-width="3.500"/><circle cx="12" cy="12" r="3.500" fill="#5fc0ee"/><path d="M13 13l7.500 7.500" stroke="#bcc3ca" stroke-width="4"/></svg></a>
      <a class="run" href="#" aria-label="Postman"><svg viewBox="0 0 25 25"><rect width="25" height="25" rx="5.500" fill="#f07146"/><circle cx="18.500" cy="6.500" r="2.400" fill="#fff"/><path d="M16.500 8.500 9 15.500 5 20.500M18 9.500 11 16.500 5 20.500" fill="#fff" stroke="#fff" stroke-width="1.200"/></svg></a>
      <a class="run" href="#" aria-label="Discord"><svg viewBox="0 0 25 25"><rect width="25" height="25" rx="5.500" fill="#5b65e8"/><path d="M4.500 18C4 13.500 5 11 6.500 8.500c1-.7 2.500-1 3.500-1l.5 1h4l.5-1c1 0 2.500.3 3.500 1 1.500 2.500 2.500 5 2 9.500-1.500 1-3 1.500-4 1.500l-1-1.500h-6l-1 1.500c-1 0-2.500-.5-4-1.500z" fill="#fff"/><ellipse cx="9.800" cy="13.800" rx="1.600" ry="1.900" fill="#5b65e8"/><ellipse cx="15.200" cy="13.800" rx="1.600" ry="1.900" fill="#5b65e8"/></svg><em>6632</em></a>
      <a class="run" href="#" aria-label="iTerm"><svg viewBox="0 0 25 25"><rect x=".7" y=".7" width="23.600" height="23.600" rx="5" fill="#101719" stroke="#a0a3a2" stroke-width="1.400"/><text x="4" y="9" class="prompt">$</text><path d="M8.500 4h2.500v5H8.500z" fill="#3c9c39"/></svg></a>
      <a class="run" href="#" aria-label="Steam"><svg viewBox="0 0 25 25"><circle cx="12.500" cy="12.500" r="13" fill="#204f85"/><path d="M0 11a13 13 0 0 1 25-1L12 8z" fill="#172c50"/><path d="M0 13.500l8 3.500 8-8" stroke="#e8eaed" stroke-width="4" fill="none"/><circle cx="17.500" cy="9.500" r="4" fill="#1b3b68" stroke="#e8eaed" stroke-width="1.500"/><circle cx="9" cy="17.500" r="3" fill="#1f4d80" stroke="#e8eaed" stroke-width="1.300"/></svg></a>
      <a class="run" href="#" aria-label="Docker"><svg viewBox="0 0 25 25"><rect width="25" height="25" rx="5.500" fill="#3c8be6"/><path d="M3 12.500h15c0-1.500-.3-2.500.7-4 1.300 1 1.500 2 1.500 3 1 0 2 0 2.500.5-.5 1-1.700 1.500-3 1.500C18 18 15 19.500 10.500 19.500 6 19.500 3 17 3 12.500z" fill="#fff"/><path d="M5 10.500h11M7.500 8h6M11.500 5.500h2" stroke="#fff" stroke-width="2" stroke-dasharray="2 .4"/></svg></a>
      <a class="run" href="#" aria-label="Premiere Pro"><svg viewBox="0 0 25 25"><rect width="25" height="25" rx="5.500" fill="#06005d"/><text x="12.500" y="17" class="pr">Pr</text></svg></a>
      <a class="run" href="#" aria-label="WhatsApp"><svg viewBox="0 0 25 25"><rect width="25" height="25" rx="5.500" fill="#5bc95a"/><path d="M4.500 20.500l1.200-4.200a8 8 0 1 1 3 3z" fill="none" stroke="#fff" stroke-width="1.600"/><path d="M9.500 8c-2 2 2 8.500 5.500 9 1.500 0 2.500-1 2.500-2l-2.500-1.300-1 1.300c-1.500-.5-2.700-1.800-3.200-3.200l.9-1-1-2.500z" fill="#fff"/></svg></a>
      <i class="sep"></i>
      <a href="#" aria-label="Document"><svg viewBox="0 0 25 25"><path d="M3-2h12l7 7v20H3z" fill="#e7e7e5"/><path d="M15-2v7h7z" fill="#b9bab9"/><path d="M5 2h6M5 5h7M5 8h7M5 11h7M5 14h7M5 17h7M5 20h7M13 11h6M13 14h6M13 17h6" stroke="#a8a8a8" stroke-dasharray="3 1"/></svg></a>
      <a href="#" aria-label="Trash"><svg viewBox="0 0 25 25"><path d="M2 0h21l-3 23c-.3 3-14.700 3-15 0z" fill="#6b6d6f"/><path d="M8 3l1 20M17 3l-1 20" stroke="#7d7f80"/><ellipse cx="12.500" cy="1" rx="10.500" ry="2" fill="#4b4d4f" stroke="#8a8c8d"/></svg></a>
    </div>
  </nav>
</div>
</body>
</html>
```

FILE: styles.css
```css
* { box-sizing: border-box; }
html, body { height: 100%; }
body { margin: 0; background: #000; overflow: hidden; font: 500 9px/12px Inter, "Liberation Sans", sans-serif; color: #e4e4e4; }
button { border: 0; margin: 0; padding: 0; background: none; color: inherit; font: inherit; display: flex; align-items: center; justify-content: center; }
a { color: inherit; text-decoration: none; }
svg { display: block; flex: none; overflow: visible; }
.sprite { position: absolute; width: 0; height: 0; }

.desktop { height: 100%; margin: 0 71px 0 97px; display: flex; flex-direction: column; background: #050304; }
.menubar { flex: 0 0 26px; display: flex; justify-content: space-between; align-items: center; padding: 0 11px 0 14px; background: linear-gradient(90deg, #210b17, #1e0a14 60%, #1a0508 75%, #130508); white-space: nowrap; }
.menus { display: flex; align-items: center; gap: 14px; }
.menus b { font-weight: 700; }
.apple { margin-right: -1px; }
.status { display: flex; align-items: center; gap: 13px; }
.zoomword { font-size: 11px; }
.status .control { margin-left: -9px; }
.status .siri { margin-right: -5px; }

.window { position: relative; flex: 1; min-height: 0; display: flex; flex-direction: column; border: 1px solid #4a4a4a; border-radius: 9px; background: #3c3c3c; overflow: hidden; }
.tabstrip { flex: 0 0 27px; display: flex; background: #1f1f1f; padding-top: 4px; }
.lights { flex: 0 0 62px; display: flex; align-items: center; gap: 6px; padding: 0 0 4px 14px; }
.lights i { width: 8px; height: 8px; border-radius: 50%; }
.red { background: #ec6a5e; } .yellow { background: #f4bf4f; } .green { background: #61c554; }
.tabs { flex: 1; min-width: 0; display: flex; }
.tab { position: relative; flex: 1 1 0; min-width: 0; display: flex; align-items: center; gap: 5px; padding: 0 9px 4px 8px; }
.tab::after { content: ""; position: absolute; right: 0; top: 4px; width: 1px; height: 12px; background: #484848; }
.tab span { flex: 1; min-width: 0; white-space: nowrap; color: #d4d4d4; font: 400 9px/12px Roboto, sans-serif; }
.tab .fade { mask-image: linear-gradient(90deg, #000 80%, transparent 98%); }
.tab button svg { width: 8px; height: 8px; }
.fav { width: 11px; height: 11px; }
.tab.active { background: #3c3c3c; border-radius: 7px 7px 0 0; }
.tab.active::after, .tab.last::after { display: none; }
.tabtools { flex: 0 0 81px; display: flex; justify-content: space-between; align-items: center; padding: 0 4px 4px 6px; }
.tabsearch { width: 19px; height: 19px; border-radius: 6px; background: #3a3a3a; }

.toolbar { flex: 0 0 32px; display: flex; align-items: center; padding: 0 3px 0 9px; }
.toolbar > button { margin-right: 13px; }
.omnibox { flex: 1; height: 24px; display: flex; align-items: center; gap: 10px; padding: 0 11px 0 3px; border-radius: 12px; background: #282828; }
.siteinfo { width: 17px; height: 17px; border-radius: 50%; background: #3d3d3d; }
.omnibox input { flex: 1; min-width: 0; margin-left: -6px; border: 0; padding: 0; outline: 0; background: none; color: #e8e8e8; font: 400 10px/14px Inter, sans-serif; }
.extensions { display: flex; align-items: center; gap: 13px; padding: 0 9px 0 12px; }
.extensions svg { width: 12px; height: 12px; }
.extensions .vline { margin: 0 -1px; }
.extensions .avatar { width: 14px; height: 14px; }
.vline { width: 1px; height: 11px; background: #5c5c5c; }
.toolbar > .update { height: 24px; gap: 6px; padding: 0 9px 0 7px; margin: 0; border-radius: 12px; background: #1c4a77; color: #d7eafb; white-space: nowrap; }

.bookmarks { flex: 0 0 24px; display: flex; align-items: center; gap: 11px; padding: 0 9px 4px 8px; color: #d0d0d0; font: 400 9px/12px Roboto, sans-serif; white-space: nowrap; }
.bookmarks a { display: flex; align-items: center; gap: 5px; }
.bookmarks svg { width: 11px; height: 11px; }
.bookmarks .all { margin-left: auto; padding-left: 11px; border-left: 1px solid #5c5c5c; }

.board { position: relative; flex: 1; min-height: 0; display: flex; flex-direction: column; justify-content: space-between; padding: 11px 10px 10px 11px; background: #121212; font: 400 8px/12px "Noto Sans CJK SC", "Open Sans", sans-serif; }
.scene { position: absolute; inset: 0; width: 100%; height: 100%; }
.hand { fill: #d3d3d3; stroke: none; font: 400 14px Lato, sans-serif; text-anchor: middle; }
.island { background: #232329; border-radius: 6px; }
.square { width: 25px; height: 25px; }
.top { position: relative; display: grid; grid-template-columns: 1fr auto 1fr; align-items: start; }
.leftcol { display: flex; flex-direction: column; align-items: flex-start; gap: 17px; }
.panel { width: 140px; padding: 8px; display: flex; flex-direction: column; gap: 8px; }
fieldset { margin: 0; padding: 0; border: 0; min-width: 0; }
legend { padding: 0; height: 14px; color: #e3e3e8; font-family: Lato, sans-serif; }
.row { display: flex; align-items: center; gap: 6px; }
.row button { width: 22px; height: 22px; border-radius: 6px; background: #2e2d36; }
.row button.on, .toolset .on { background: #403e6a; }
.row svg, .bottom button svg { width: 12px; height: 12px; fill: none; stroke: #e0e0e6; }
.colors .row { height: 24px; gap: 4px; }
.colors .row .swatch { width: 15px; height: 15px; border-radius: 3px; }
.colors .row .white { background: #d3d3d3; }
.colors .row .on { box-shadow: 0 0 0 1px #232329, 0 0 0 2px #9d97c8; }
.colors .row .pink { background: #ff8383; }
.colors .row .grn { background: #4a9048; }
.colors .row .blue { background: #699bdc; }
.colors .row .brown { background: #a8630f; }
.colors .row .big { width: 18px; height: 18px; }
.colors .vline { margin: 0 3px; height: 16px; background: #303038; }
.opacity { height: 30px; }
.opacity input { appearance: none; display: block; width: 122px; height: 12px; margin: 0 0 0 2px; background: linear-gradient(#3a78f0, #3a78f0) center / 100% 6px no-repeat; border-radius: 3px; }
.opacity input::-webkit-slider-thumb { appearance: none; width: 11px; height: 11px; border-radius: 50%; background: #3a78f0; }

.midcol { display: flex; flex-direction: column; align-items: center; gap: 8px; }
.tools { width: 381px; padding: 3px; display: flex; align-items: center; }
.tools .vline { margin: 0 6px; height: 17px; background: #34343c; }
.toolset { flex: 1; display: flex; justify-content: space-between; }
.tools button { position: relative; flex: none; width: 25px; height: 25px; border-radius: 6px; }
.tools svg { width: 13px; height: 13px; fill: none; stroke: #d4d4da; }
.tools sub { position: absolute; right: 2px; bottom: 2px; font-size: 7px; line-height: 8px; color: #85858d; }
.tools .on sub { color: #d8d6ff; }
.ai { position: absolute; right: 0; bottom: -2px; padding: 0 3px; border-radius: 5px; background: #f3c2cf; color: #251b1f; font: 700 6px/10px "Liberation Mono", monospace; }
.hint { margin: 0; color: #8b8b8b; font-family: Lato, sans-serif; }
.rightcol { display: flex; justify-content: flex-end; gap: 8px; }
.share { width: 38px; height: 25px; border-radius: 6px; background: #a8a5ff; color: #25233c; }
.library { height: 25px; width: 57px; gap: 6px; }
.bottom { position: relative; display: flex; align-items: center; gap: 6px; }
.zoombox { display: flex; width: 91px; }
.bottom button { height: 25px; flex: 1; }
.bottom .pct { flex: 0 0 41px; font-size: 9px; }
.history { display: flex; width: 51px; }
.shield { margin: 0 7px 0 auto; }
.bottom .square { flex: 0 0 25px; }

/* overlays on top of the page */
.pause { position: absolute; top: 68px; right: 24px; display: flex; gap: 23px; }
.pause i { width: 23px; height: 68px; background: rgba(255, 255, 255, .38); }
.cursor { position: absolute; left: 809px; top: 602px; }

.dock { flex: 0 0 36px; min-width: 0; min-height: 0; height: 36px; display: flex; justify-content: center; align-items: flex-start; background: #050304; }
.shelf { margin-top: 1px; height: 46px; display: flex; align-items: flex-start; gap: 7px; padding: 4px 5px 0; border: 1px solid #353033; border-radius: 10px; background: linear-gradient(90deg, #121011, #1a1011 20%, #2b1214 30%, #3b1516 55%, #3a1a21 72%, #423856 84%, #251a22 92%, #121013); }
.shelf a { position: relative; width: 25px; height: 32px; }
.shelf svg { width: 25px; height: 25px; }
.shelf .run::after { content: ""; position: absolute; left: 11px; top: 28px; width: 3px; height: 3px; border-radius: 50%; background: #bdb6b8; }
.sep { width: 1px; height: 28px; margin: 0 2px; background: #5c4a4d; }
.shelf em { position: absolute; right: -3px; top: -3px; min-width: 12px; padding: 0 3px; border-radius: 6px; background: #df4440; color: #fff; font: 500 6px/11px Inter, sans-serif; text-align: center; }
.shelf text { fill: #fff; text-anchor: middle; font-family: Inter, sans-serif; }
.cal-m { font-size: 6px; font-weight: 700; }
.shelf .cal-d { font-size: 14px; font-weight: 400; fill: #333; }
.tv { font-size: 9px; font-weight: 600; }
.zm { font-size: 7px; font-weight: 600; }
.pr { font-size: 13px; font-weight: 600; }
.shelf .pr { fill: #a9a4f2; }
.shelf .prompt { font-size: 7px; fill: #4ec94a; text-anchor: start; }
```
